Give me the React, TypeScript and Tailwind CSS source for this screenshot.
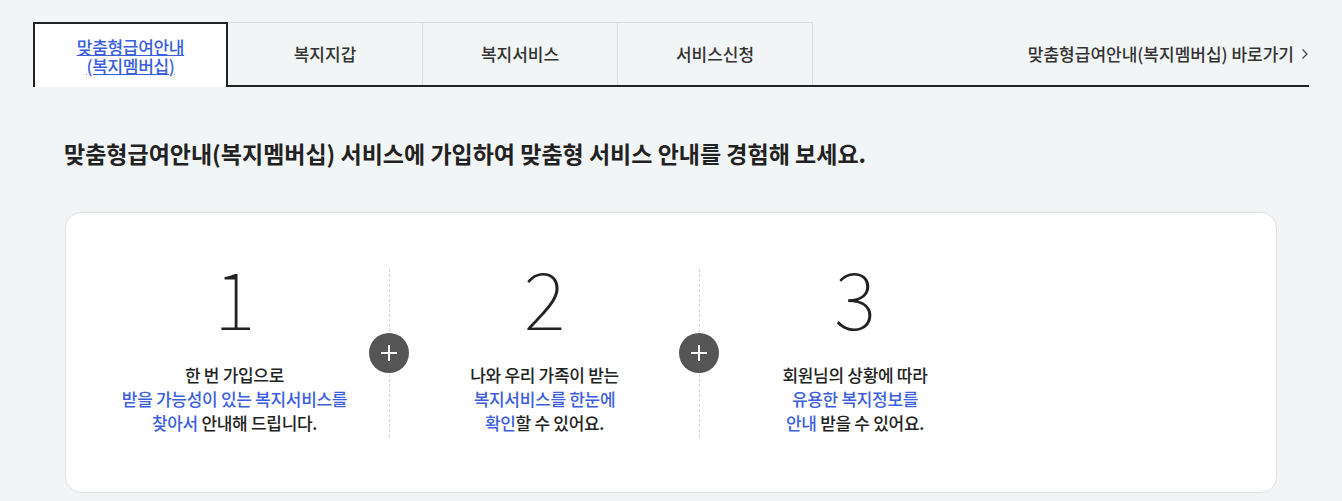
import React from "react";

const font = { fontFamily: '"Noto Sans CJK KR", "Noto Sans", sans-serif' };

function Plus() {
  return (
    <div className="absolute right-[-20px] top-1/2 -translate-y-1/2 w-10 h-10 rounded-full bg-[#555555] flex items-center justify-center z-10">
      <svg width="18" height="18" viewBox="0 0 18 18">
        <path d="M9 1v16M1 9h16" stroke="#fff" strokeWidth="2" />
      </svg>
    </div>
  );
}

export default function App() {
  const tabs = ["복지지갑", "복지서비스", "서비스신청"];
  return (
    <div className="w-[1342px] h-[501px] bg-[#f2f5f6] overflow-hidden" style={font}>
      <div className="pt-[22px] px-[33px]">
        {/* tabs */}
        <div className="flex items-end border-b-2 border-[#222] h-[65px]">
          <div className="w-[195px] h-[65px] -mb-[2px] bg-white border-2 border-b-0 border-[#222] flex items-center justify-center">
            <a className="text-[#3b5ee0] underline text-[17px] leading-[19px] font-medium text-center tracking-[-0.3px]">
              맞춤형급여안내
              <br />
              (복지멤버십)
            </a>
          </div>
          {tabs.map((t) => (
            <div
              key={t}
              className="w-[195px] h-[63px] border-t border-r border-[#dddddd] flex items-center justify-center text-[17px] font-medium text-[#333]"
            >
              {t}
            </div>
          ))}
          <div className="flex-1 h-[63px] flex items-center justify-end text-[17px] font-medium text-[#333]">
            맞춤형급여안내(복지멤버십) 바로가기
            <svg className="ml-[7px]" width="8" height="12" viewBox="0 0 8 12">
              <path d="M1.5 1.5l4.5 4.5-4.5 4.5" stroke="#444" strokeWidth="1.3" fill="none" />
            </svg>
          </div>
        </div>

        {/* heading */}
        <h2 className="mt-[50px] ml-[31px] text-[23px] leading-[32px] font-bold text-[#222]">
          맞춤형급여안내(복지멤버십) 서비스에 가입하여 맞춤형 서비스 안내를 경험해 보세요.
        </h2>

        {/* card */}
        <div className="mt-[43px] mx-[32px] h-[281px] bg-white border border-[#e0e0e0] rounded-[16px] pl-[14px] flex items-center">
          <div className="flex">
            <Step
              n="1"
              divider
              lines={[
                <span key="a">한 번 가입으로</span>,
                <span key="b" className="text-[#3d5fdf]">받을 가능성이 있는 복지서비스를</span>,
                <span key="c">
                  <span className="text-[#3d5fdf]">찾아서</span> 안내해 드립니다.
                </span>,
              ]}
            />
            <Step
              n="2"
              divider
              lines={[
                <span key="a">나와 우리 가족이 받는</span>,
                <span key="b" className="text-[#3d5fdf]">복지서비스를 한눈에</span>,
                <span key="c">
                  <span className="text-[#3d5fdf]">확인</span>할 수 있어요.
                </span>,
              ]}
            />
            <Step
              n="3"
              lines={[
                <span key="a">회원님의 상황에 따라</span>,
                <span key="b" className="text-[#3d5fdf]">유용한 복지정보를</span>,
                <span key="c">
                  <span className="text-[#3d5fdf]">안내</span> 받을 수 있어요.
                </span>,
              ]}
            />
          </div>
        </div>
      </div>
    </div>
  );
}

function Step({ n, lines, divider }: { n: string; lines: React.ReactNode[]; divider?: boolean }) {
  return (
    <div
      className={
        "relative w-[310px] h-[168px] flex flex-col items-center " +
        (divider ? "border-r border-dashed border-[#d6d6d6]" : "")
      }
    >
      <div
        className="text-[80px] leading-[60px] h-[60px] -mt-[4px] font-thin text-[#222]"
        style={{ fontFamily: '"Noto Sans CJK KR", "Noto Sans", sans-serif', fontWeight: 100 }}
      >
        {n}
      </div>
      <div className="mt-[38px] flex flex-col items-center text-[17px] leading-[24px] font-medium text-[#222] tracking-[-0.3px]">
        {lines}
      </div>
      {divider && <Plus />}
    </div>
  );
}
